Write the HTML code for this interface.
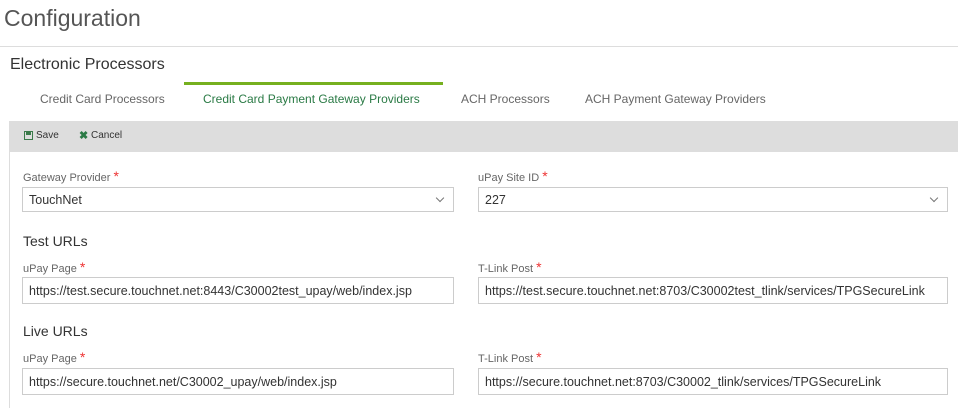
<!DOCTYPE html>
<html><head><style>
body{margin:0;width:958px;height:408px;overflow:hidden;background:#fff;font-family:"Liberation Sans",sans-serif;position:relative}
.a{position:absolute;white-space:nowrap}
.lbl{font-size:11px;color:#666}
.st{color:#e33;font-size:14px}
.inp{position:absolute;height:25px;border:1px solid #ccc;box-sizing:border-box;font-size:12.5px;color:#333;padding-left:6px;line-height:24px;white-space:nowrap;background:#fff}
.chev{position:absolute;right:10px;top:7px;width:5px;height:5px;border-right:1px solid #777;border-bottom:1px solid #777;transform:rotate(45deg)}
</style></head><body>
<div class="a" style="left:4px;top:5px;font-size:23px;color:#555">Configuration</div>
<div class="a" style="left:0;top:46px;width:958px;height:1px;background:#ddd"></div>
<div class="a" style="left:10px;top:56px;font-size:16px;color:#333">Electronic Processors</div>
<div class="a" style="left:184px;top:82px;width:259px;height:3px;background:#76b01f"></div>
<div class="a" style="left:40px;top:92px;font-size:12px;color:#666">Credit Card Processors</div>
<div class="a" style="left:203px;top:92px;font-size:12px;color:#2a7a45">Credit Card Payment Gateway Providers</div>
<div class="a" style="left:461px;top:92px;font-size:12px;color:#666">ACH Processors</div>
<div class="a" style="left:585px;top:92px;font-size:12px;color:#666">ACH Payment Gateway Providers</div>
<div class="a" style="left:9px;top:121px;width:949px;height:31px;background:#ddd"></div>
<div class="a" style="left:9px;top:152px;width:1px;height:256px;background:#ddd"></div>
<svg class="a" style="left:24px;top:131px" width="9" height="9" viewBox="0 0 9 9"><rect x=".5" y=".5" width="8" height="8" fill="none" stroke="#3a7a4a"/><rect x="2" y="1" width="5" height="3" fill="#3a7a4a"/></svg>
<div class="a" style="left:36px;top:130px;font-size:10px;color:#333">Save</div>
<div class="a" style="left:79px;top:129px;font-size:11px;color:#2a7a45;font-weight:bold">✖</div>
<div class="a" style="left:91px;top:130px;font-size:10px;color:#333">Cancel</div>
<div class="a lbl" style="left:23px;top:168px">Gateway Provider <span class="st">*</span></div>
<div class="a lbl" style="left:478px;top:168px">uPay Site ID <span class="st">*</span></div>
<div class="inp" style="left:22px;top:187px;width:432px">TouchNet<div class="chev"></div></div>
<div class="inp" style="left:478px;top:187px;width:470px">227<div class="chev"></div></div>
<div class="a" style="left:23px;top:233px;font-size:14px;color:#333">Test URLs</div>
<div class="a lbl" style="left:23px;top:259px">uPay Page <span class="st">*</span></div>
<div class="a lbl" style="left:478px;top:259px">T-Link Post <span class="st">*</span></div>
<div class="inp" style="left:22px;top:277px;width:432px;height:27px;line-height:26px">https://test.secure.touchnet.net:8443/C30002test_upay/web/index.jsp</div>
<div class="inp" style="left:478px;top:277px;width:470px;height:27px;line-height:26px">https://test.secure.touchnet.net:8703/C30002test_tlink/services/TPGSecureLink</div>
<div class="a" style="left:23px;top:323px;font-size:14px;color:#333">Live URLs</div>
<div class="a lbl" style="left:23px;top:349px">uPay Page <span class="st">*</span></div>
<div class="a lbl" style="left:478px;top:349px">T-Link Post <span class="st">*</span></div>
<div class="inp" style="left:22px;top:368px;width:432px;height:27px;line-height:26px">https://secure.touchnet.net/C30002_upay/web/index.jsp</div>
<div class="inp" style="left:478px;top:368px;width:470px;height:27px;line-height:26px">https://secure.touchnet.net:8703/C30002_tlink/services/TPGSecureLink</div>
</body></html>
